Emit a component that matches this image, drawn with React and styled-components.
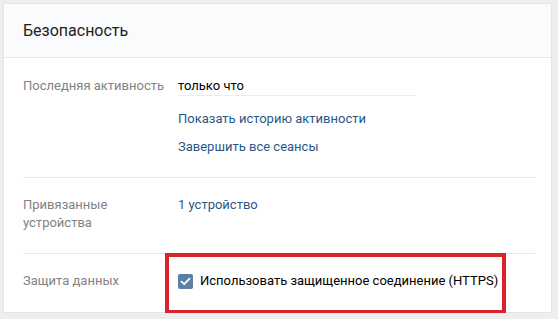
import styled, { createGlobalStyle } from "styled-components";

const GlobalStyle = createGlobalStyle`
  html, body {
    margin: 0;
    background: #edeef0;
  }
  body {
    padding: 3px 6px 0 3px;
    font-family: Roboto, "Open Sans", "Liberation Sans", sans-serif;
    font-size: 13px;
    -webkit-font-smoothing: antialiased;
  }
`;

const Card = styled.div`
  background: #fff;
  border: 1px solid #e3e4e8;
  border-radius: 2px;
  width: 547px;
`;

const Header = styled.div`
  height: 53px;
  display: flex;
  align-items: center;
  padding: 0 19px;
  background: #fafbfc;
  border-bottom: 1px solid #e7e8ec;
  font-size: 16px;
  color: #222;
`;

const Body = styled.div`
  padding: 0 16px 0 19px;
`;

const Row = styled.div`
  position: relative;
  display: grid;
  grid-template-columns: 155px 1fr;
  padding: ${(p) => p.$pad};
  line-height: 18px;
  border-bottom: ${(p) => (p.$last ? "none" : "1px solid #e7e8ec")};
`;

const Label = styled.div`
  color: #828282;
`;

const Values = styled.div`
  display: flex;
  flex-direction: column;
  align-items: flex-start;
`;

const Field = styled.div`
  width: 238px;
  color: #000;
  border-bottom: 1px solid #eceef1;
  margin-bottom: 14px;
`;

const Link = styled.a`
  color: #2a5885;
  text-decoration: none;
  margin-bottom: ${(p) => p.$gap || 0}px;
  cursor: pointer;
`;

const CheckRow = styled.label`
  display: flex;
  align-items: center;
  gap: 7px;
  color: #000;
`;

const Box = styled.span`
  width: 15px;
  height: 15px;
  border-radius: 2px;
  background: #5b7fa7;
  display: flex;
  align-items: center;
  justify-content: center;
`;

const Highlight = styled.div`
  position: absolute;
  left: 142px;
  top: -1px;
  width: 333px;
  height: 53px;
  border: 4px solid #d8222c;
  pointer-events: none;
`;

export default function App() {
  return (
    <>
      <GlobalStyle />
      <Card>
        <Header>Безопасность</Header>
        <Body>
          <Row $pad="19px 0 21px">
            <Label>Последняя активность</Label>
            <Values>
              <Field>только что</Field>
              <Link $gap={10}>Показать историю активности</Link>
              <Link>Завершить все сеансы</Link>
            </Values>
          </Row>
          <Row $pad="18px 0 21px">
            <Label>
              Привязанные
              <br />
              устройства
            </Label>
            <Values>
              <Link>1 устройство</Link>
            </Values>
          </Row>
          <Row $pad="18px 0 22px" $last>
            <Label>Защита данных</Label>
            <Values>
              <CheckRow>
                <Box>
                  <svg width="11" height="9" viewBox="0 0 11 9">
                    <path
                      d="M1.5 4.6 L4.2 7.2 L9.6 1.6"
                      fill="none"
                      stroke="#fff"
                      strokeWidth="1.8"
                      strokeLinecap="round"
                      strokeLinejoin="round"
                    />
                  </svg>
                </Box>
                Использовать защищенное соединение (HTTPS)
              </CheckRow>
            </Values>
            <Highlight />
          </Row>
        </Body>
      </Card>
    </>
  );
}
